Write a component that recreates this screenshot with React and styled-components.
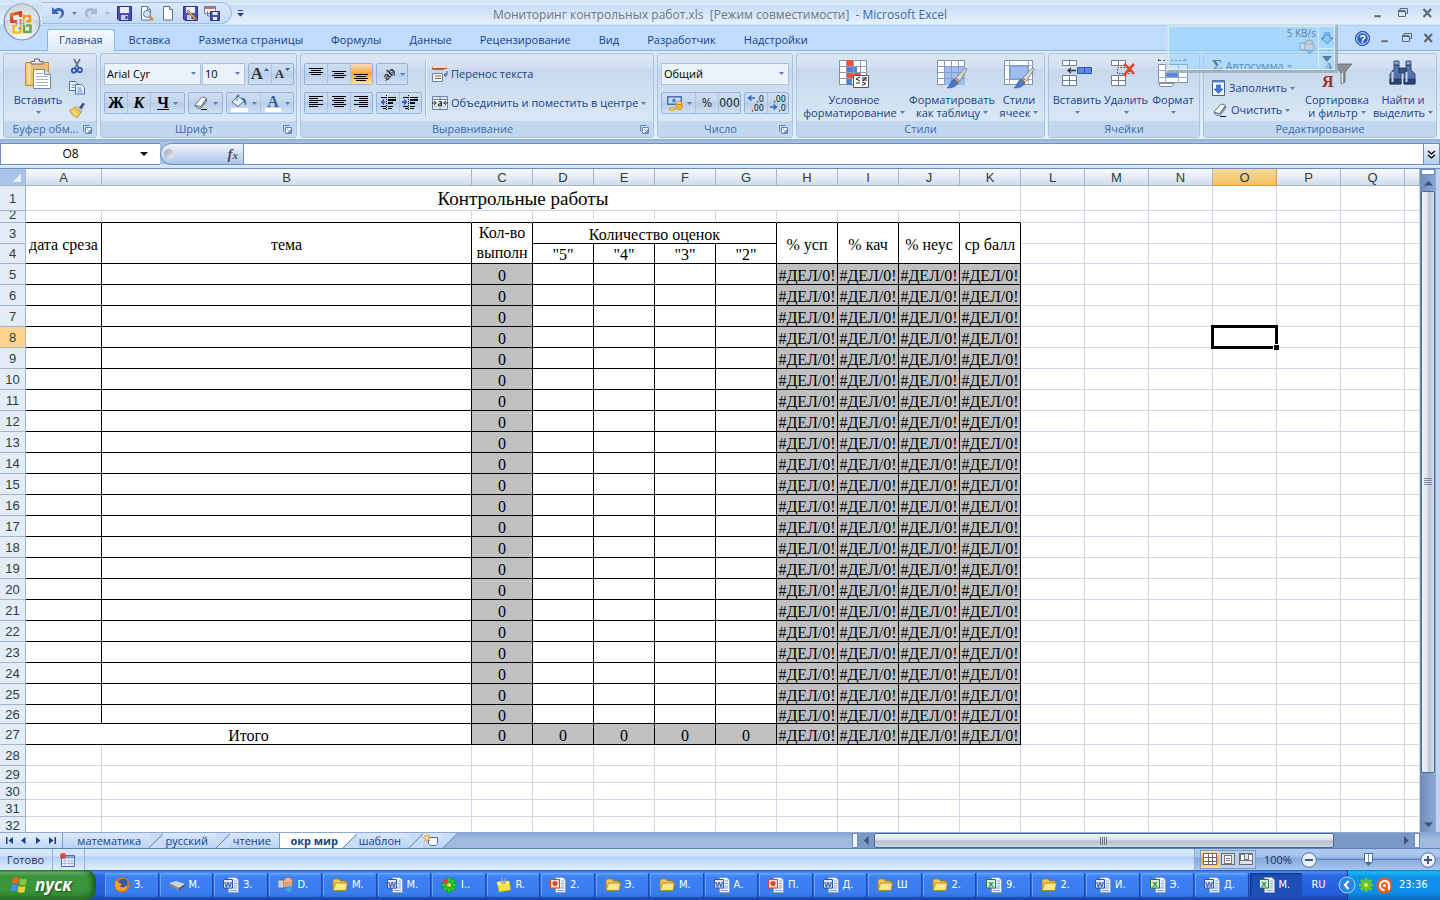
import React from "react";
import styled, { createGlobalStyle, css } from "styled-components";

const Global = createGlobalStyle`
  *, *::before, *::after { box-sizing: border-box; }
  html, body, #root { height: 100%; margin: 0; }
  body { font: 11px/14px "Open Sans", "Noto Sans", sans-serif; color: #15428b; overflow: hidden; }
  button, input, select { font: inherit; color: inherit; margin: 0; padding: 0; border: 0; background: none; border-radius: 0; }
  button { cursor: default; }
`;

const Screen = styled.div`
  display: flex;
  flex-direction: column;
  height: 100vh;
  position: relative;
  background: #bfdbff;
`;

const Svg = styled.svg`
  display: block;
  flex: none;
`;

/* ---------- title bar ---------- */
const TitleBar = styled.header`
  display: grid;
  grid-template-columns: 1fr auto 1fr;
  align-items: center;
  height: 26px;
  flex: none;
  background: linear-gradient(#d8e6f9 0, #d8e6f9 5px, #c9ddf7 5px, #e6f0fc 24px, #b2d3f2 25px);
`;
const QuickBar = styled.div`
  display: flex;
  align-items: center;
  gap: 6px;
  width: 190px;
  height: 22px;
  margin-left: 42px;
  padding-left: 8px;
  border: 1px solid #9dbbe3;
  border-left: 0;
  border-radius: 0 12px 12px 0;
  background: linear-gradient(#dbe9fb, #c4daf6);
`;
const QuickRow = styled.div`
  display: flex;
  align-items: center;
  gap: 4px;
`;
const IconButton = styled.button`
  display: flex;
  align-items: center;
  justify-content: center;
  width: ${(p) => p.$w || 16}px;
  height: 20px;
  flex: none;
`;
const Title = styled.h1`
  margin: 0;
  padding-top: 3px;
  font: 400 12px/18px "Open Sans", "Noto Sans", sans-serif;
  white-space: pre;
  color: #6d7684;
  span { color: #3e6aaa; margin-left: 3px; }
`;
const WindowButtons = styled.div`
  display: flex;
  justify-content: flex-end;
  gap: 9px;
  padding-right: 5px;
`;
const OfficeButton = styled.button`
  position: absolute;
  left: 3px;
  top: 3px;
  width: 38px;
  height: 38px;
`;

/* ---------- tabs ---------- */
const TabBar = styled.nav`
  display: flex;
  align-items: flex-end;
  height: 25px;
  flex: none;
  padding-left: 47px;
  border-bottom: 1px solid #8db2e3;
  background: #bfdbff;
`;
const RibbonTab = styled.button`
  height: 22px;
  padding: 0 ${(p) => (p.$active ? 11 : 14)}px 1px;
  margin-bottom: -1px;
  white-space: nowrap;
  ${(p) =>
    p.$active &&
    css`
      && {
        border: 1px solid #8db2e3;
        border-bottom: 0;
        border-radius: 3px 3px 0 0;
        background: linear-gradient(#f4f9ff, #dfeaf6);
      }
    `}
`;
const TabTools = styled.div`
  display: flex;
  align-items: center;
  gap: 6px;
  margin-left: auto;
  padding: 0 4px 2px 0;
`;

/* ---------- ribbon ---------- */
const Ribbon = styled.section`
  display: flex;
  gap: 3px;
  flex: none;
  height: 88px;
  padding: 2px 3px 1px;
  background: linear-gradient(#dde8f5, #cfe0f3 30%, #e3f2fd);
`;
const GroupBox = styled.section`
  display: flex;
  flex-direction: column;
  flex: ${(p) => (p.$w ? "none" : "1 0 0")};
  width: ${(p) => (p.$w ? p.$w + "px" : "auto")};
  border: 1px solid #a9c3e0;
  border-radius: 3px;
  overflow: hidden;
  background: linear-gradient(#dce7f4 0, #d3e0f0 14px, #c7d8ec 15px, #d9e7f5 66px);
`;
const GroupBody = styled.div`
  display: flex;
  flex: 1;
  min-height: 0;
  padding: 0 0 0 ${(p) => p.$pad || 3}px;
`;
const GroupLabel = styled.footer`
  display: flex;
  height: 16px;
  flex: none;
  align-items: center;
  padding: 0 4px;
  background: #c1d8f0;
  color: #3e6aaa;
  span { flex: 1; text-align: center; white-space: nowrap; }
`;
const Stack = styled.div`
  display: flex;
  flex-direction: column;
  gap: 7px;
  padding-top: 9px;
`;
const Line = styled.div`
  display: flex;
  gap: 3px;
  height: 22px;
`;
const Combo = styled.div`
  position: relative;
  width: ${(p) => p.$w}px;
  height: 22px;
  margin-right: ${(p) => (p.$joined ? -2 : 0)}px;
  border: 1px solid #abc1de;
  background: #eaf2fb;
  color: #000;
  select {
    width: 100%;
    height: 20px;
    padding-left: 2px;
    appearance: none;
    outline: 0;
  }
  svg { position: absolute; right: 4px; top: 8px; pointer-events: none; }
`;
const ButtonGroup = styled.div`
  display: flex;
  height: 22px;
  border: 1px solid #92b3dc;
  border-radius: 2px;
  background: linear-gradient(#cfdff2 0, #c2d5ec 9px, #b7cde8 10px, #cfe0f4);
  button + button { border-left: 1px solid #a9c3e3; }
`;
const ToolButton = styled.button`
  display: flex;
  align-items: center;
  justify-content: center;
  gap: ${(p) => (p.$tight ? 1 : 4)}px;
  width: ${(p) => p.$w}px;
  && {
    background: ${(p) => (p.$on ? "linear-gradient(#fbdbb5 0, #f9b257 8px, #fb9f33 9px, #fee68a)" : "none")};
    ${(p) => p.$digits && 'font: 12px/18px "DejaVu Sans Condensed", sans-serif; color: #222;'}
  }
`;
const Letter = styled.span`
  font: ${(p) => (p.$i ? "italic " : "")}bold ${(p) => p.$s || 16}px/18px "Liberation Serif", serif;
  color: ${(p) => p.$c || "#000"};
  text-decoration: ${(p) => (p.$u ? "underline" : "none")};
`;
const Divider = styled.div`
  width: 2px;
  height: 55px;
  margin: 7px 5px 0 3px;
  border-left: 1px solid #9cb8dc;
  border-right: 1px solid #eef5fc;
`;
const TextButton = styled.button`
  display: flex;
  align-items: center;
  gap: 3px;
  height: 22px;
  flex: none;
  white-space: nowrap;
`;
const SmallStack = styled.div`
  display: flex;
  flex-direction: column;
  padding-top: 1px;
  width: ${(p) => p.$w}px;
`;
const LargeButton = styled.button`
  display: flex;
  flex-direction: column;
  align-items: center;
  width: ${(p) => p.$w}px;
  flex: none;
  && { padding-top: 4px; }
`;
const LargeIcon = styled.span`
  display: flex;
  align-items: center;
  justify-content: center;
  height: 32px;
  margin-bottom: 3px;
`;
const LargeText = styled.span`
  display: flex;
  align-items: center;
  gap: 3px;
  height: 13px;
  line-height: 13px;
  white-space: nowrap;
`;

/* ---------- formula bar ---------- */
const FormulaBar = styled.div`
  display: flex;
  height: 29px;
  flex: none;
  padding: 4px 0 3px;
  background: linear-gradient(#93acd0 0, #abc4e6 4px, #abc4e6 25px, #e2edfb 26px, #cfe0f5);
`;
const NameBox = styled.div`
  display: flex;
  align-items: center;
  width: 160px;
  border: 1px solid #6a8fbf;
  border-width: 1px 0 1px 1px;
  background: #fff;
  color: #000;
  input { width: 139px; text-align: center; font-size: 12px; outline: 0; }
`;
const FxStrip = styled.div`
  display: flex;
  align-items: center;
  justify-content: space-between;
  width: 84px;
  padding: 0 5px 0 3px;
  border: 1px solid #6a8fbf;
  border-radius: 11px 0 0 11px;
  background: linear-gradient(#f0f5fb, #aac4e6);
`;
const Knob = styled.span`
  width: 10px;
  height: 10px;
  border-radius: 50%;
  background: linear-gradient(135deg, #9aa2b0, #f3f5f9);
`;
const FxButton = styled.button`
  && { font: italic bold 15px/18px "Liberation Serif", serif; color: #4d535f; }
  small { font-size: 11px; }
`;
const FormulaInput = styled.input`
  flex: 1;
  min-width: 0;
  && { border: 1px solid #6a8fbf; border-left: 0; background: #fff; }
`;
const ExpandButton = styled.button`
  display: flex;
  align-items: center;
  justify-content: center;
  width: 16px;
  && { border: 1px solid #6a8fbf; border-left: 0; background: linear-gradient(#f4f8fd, #b5cceb); }
`;

/* ---------- sheet ---------- */
const SheetArea = styled.main`
  display: flex;
  flex: 1;
  min-height: 0;
  border-top: 1px solid #6a8fbf;
  background: #bfd4f2;
`;
const GridPane = styled.div`
  flex: 1;
  min-width: 0;
  overflow: hidden;
  background: #fff;
`;
const Grid = styled.table`
  width: 100%;
  table-layout: fixed;
  border-collapse: separate;
  border-spacing: 0;
  color: #000;
  font: 16px/20px "Liberation Serif", serif;
`;
const ColHead = styled.th`
  height: 17px;
  padding: 0;
  font: 13px/15px "Liberation Sans", sans-serif;
  color: #27413e;
  border-right: 1px solid ${(p) => (p.$sel ? "#f29536" : "#9eb6ce")};
  border-bottom: 1px solid ${(p) => (p.$sel ? "#f29536" : "#9eb6ce")};
  background: ${(p) => (p.$sel ? "linear-gradient(#f9d9a2, #f1c05f)" : "linear-gradient(#f9fbfd, #d3dbe9)")};
`;
const Corner = styled.td`
  padding: 0;
  border-right: 1px solid #9eb6ce;
  border-bottom: 1px solid #9eb6ce;
  background:
    linear-gradient(135deg, transparent 50%, #e9f0fa 51%) right 4px bottom 3px / 9px 9px no-repeat
    #a9c4e9;
`;
const RowHead = styled.th`
  height: ${(p) => p.$h}px;
  padding: 0;
  overflow: hidden;
  border-right: 1px solid #9eb6ce;
  border-bottom: 1px solid #9eb6ce;
  background: ${(p) => (p.$sel ? "#ffd58d" : "#e4ecf7")};
  font: 13px/15px "Liberation Sans", sans-serif;
  color: #27413e;
  div {
    display: flex;
    align-items: flex-end;
    justify-content: center;
    height: ${(p) => Math.min(p.$h - 1, 15)}px;
    overflow: hidden;
  }
`;
const Cell = styled.td`
  position: relative;
  padding: ${(p) => (p.$wrap ? 0 : 2)}px 0 0;
  text-align: center;
  white-space: ${(p) => (p.$wrap ? "normal" : "nowrap")};
  line-height: ${(p) => (p.$wrap ? 20 : p.$title ? 22 : 9)}px;
  font-size: ${(p) => (p.$title ? 19 : 16)}px;
  border-right: 1px solid ${(p) => (p.$box ? "#000" : "#d0d7e5")};
  border-bottom: 1px solid ${(p) => (p.$box || p.$under ? "#000" : "#d0d7e5")};
  background: ${(p) => (p.$grey ? "#c0c0c0" : "#fff")};
`;
const Selection = styled.div`
  position: absolute;
  z-index: 1;
  inset: -2px;
  border: 3px solid #000;
  &::after {
    content: "";
    position: absolute;
    right: -4px;
    bottom: -4px;
    width: 6px;
    height: 6px;
    background: #000;
    border: 1px solid #fff;
    border-width: 1px 0 0 1px;
  }
`;

const VScroll = styled.div`
  display: flex;
  flex-direction: column;
  align-items: center;
  width: 16px;
  margin-right: 4px;
  background: linear-gradient(90deg, #6c8cba, #8fabd3);
`;
const SplitBox = styled.div`
  width: 14px;
  height: 6px;
  border: 1px solid #6a8fbf;
  background: #fff;
`;
const ScrollArrow = styled.button`
  display: flex;
  align-items: center;
  justify-content: center;
  width: 16px;
  height: ${(p) => p.$h || 16}px;
  flex: none;
`;
const VThumb = styled.div`
  display: flex;
  align-items: center;
  justify-content: center;
  width: 14px;
  flex: 580 0 0;
  border: 1px solid #4d6a96;
  border-radius: 2px;
  background: linear-gradient(90deg, #f2f5f9, #dfe5ee 40%, #b8c5d8 60%, #d6deea);
`;
const VRest = styled.div`
  flex: 43 0 0;
`;

/* ---------- sheet tabs ---------- */
const SheetBar = styled.div`
  display: flex;
  height: 17px;
  flex: none;
  border-top: 1px solid #8ba9d2;
  border-bottom: 1px solid #5a82b8;
  background: linear-gradient(#86a6d3, #a1b9dd 6px, #9fb8dc);
`;
const SheetNav = styled.div`
  display: flex;
  align-items: center;
  justify-content: space-around;
  width: 63px;
  padding: 0 2px;
  border-right: 1px solid #7c9cc8;
  background: linear-gradient(#e7f0fb, #c0d7f5);
`;
const SheetTab = styled.button`
  width: ${(p) => p.$w}px;
  flex: none;
  line-height: 15px;
  white-space: nowrap;
  text-align: right;
  && {
    padding-right: ${(p) => (p.$active ? 5 : 8)}px;
    font-weight: ${(p) => (p.$active ? 700 : 400)};
    background: ${(p) => (p.$active ? "#fff" : "linear-gradient(#dbe8fa, #b9d2f4)")};
    border-right: ${(p) => (p.$edge ? "1px solid #7c9cc8" : "0")};
  }
`;
const Slant = styled.span`
  width: 14px;
  flex: none;
  background: linear-gradient(135deg, ${(p) => p.$l} 48%, #6f90bf 49%, #6f90bf 52%, ${(p) => p.$r} 53%);
`;
const HScroll = styled.div`
  display: flex;
  align-items: stretch;
  flex: none;
  width: 40%;
  padding-left: 8px;
  margin-left: auto;
  margin-right: 20px;
`;
const HSplit = styled.div`
  width: 6px;
  border: 1px solid #6a8fbf;
  background: #f4f8fd;
`;
const HTrack = styled.div`
  display: flex;
  flex: 1;
  background: #7a99c5;
`;
const HThumb = styled.div`
  display: flex;
  align-items: center;
  justify-content: center;
  flex: 459 0 0;
  border: 1px solid #4d6a96;
  border-radius: 2px;
  background: linear-gradient(#f2f5f9, #d9dfe8 45%, #b5bfce 55%, #d0d8e3);
`;
const HRest = styled.div`
  flex: 64 0 0;
`;

/* ---------- status bar ---------- */
const StatusBar = styled.footer`
  display: flex;
  height: 21px;
  flex: none;
  background: linear-gradient(#d9e8fb 0, #cfe1f9 7px, #b3cff4 8px, #dcebfc 19px);
  color: #1c2f66;
`;
const StatusPart = styled.div`
  display: flex;
  align-items: center;
  padding: 0 8px 0 7px;
  border-right: 1px solid #8fb2e2;
  flex: ${(p) => (p.$grow ? 1 : "none")};
`;
const ViewPart = styled.div`
  display: flex;
  align-items: center;
  width: 245px;
  padding: 0 4px 0 5px;
  background: linear-gradient(#b0cbee 0, #a4c1ea 8px, #84a9dc 9px, #a8c6ef);
`;
const ViewGroup = styled.div`
  display: flex;
  height: 19px;
  margin-right: 8px;
  border: 1px solid #7b9cc9;
  background: #b7d0f0;
`;
const Percent = styled.span`
  width: 37px;
`;
const ZoomRange = styled.input.attrs({ type: "range" })`
  flex: 1;
  min-width: 0;
  height: 18px;
  appearance: none;
  && { background: linear-gradient(#5e83b8, #5e83b8) center / 100% 1px no-repeat; }
  &::-webkit-slider-thumb {
    appearance: none;
    width: 9px;
    height: 13px;
    background: linear-gradient(90deg, #fff 3px, #6f8fbe 3px, #6f8fbe 4px, #fff 4px) 1px 1px / 7px 8px no-repeat #4a6da3;
    clip-path: polygon(0 0, 100% 0, 100% 65%, 50% 100%, 0 65%);
  }
`;

/* ---------- task bar ---------- */
const TaskBar = styled.footer`
  display: flex;
  height: 30px;
  flex: none;
  background: linear-gradient(#1f51c4 0, #4a8ff2 2px, #2c69e2 5px, #245edb 24px, #1941a5);
  color: #fff;
  font-family: "DejaVu Sans Condensed", "DejaVu Sans", sans-serif;
`;
const StartButton = styled.button`
  display: flex;
  align-items: center;
  gap: 6px;
  width: 96px;
  flex: none;
  && {
    padding: 0 0 1px 10px;
    border-radius: 0 10px 10px 0;
    background: linear-gradient(#2f7a30 0, #71b76f 2px, #3c943b 6px, #37963a 20px, #2c7a2d);
    box-shadow: inset -4px 0 5px #1f5c20;
    font: italic bold 17px/24px "Open Sans", sans-serif;
    color: #fff;
  }
  text-shadow: 1px 1px 2px #1a4a1b;
`;
const TaskList = styled.div`
  display: flex;
  flex: 1;
  min-width: 0;
  gap: 2px;
  padding: 3px 0 3px 9px;
`;
const TaskButton = styled.button`
  display: flex;
  align-items: center;
  gap: 4px;
  flex: 1 0 0;
  min-width: 0;
  overflow: hidden;
  white-space: nowrap;
  && {
    padding-left: 9px;
    border-radius: 2px;
    color: #fff;
    background: ${(p) => (p.$on ? "#1e4fb4" : "linear-gradient(#5f9cf9 0, #3d80f3 4px, #3a7df0 20px, #3170e0)")};
    box-shadow: ${(p) => (p.$on ? "inset 1px 1px 2px #0e2f7c" : "inset 1px 1px 0 #6aa5fb, 1px 0 0 #1c48ad")};
  }
`;
const Language = styled.button`
  width: 45px;
  flex: none;
  && { color: #fff; padding-right: 12px; }
`;
const Tray = styled.div`
  position: relative;
  display: flex;
  align-items: center;
  gap: 2px;
  width: 93px;
  flex: none;
  border-left: 1px solid #0b3a9e;
  background: linear-gradient(#0c7bd2 0, #19b9f5 2px, #1290e8 7px, #0f8eea 22px, #0b68c0);
  time { margin-left: 4px; }
`;
const TrayToggle = styled.button`
  display: flex;
  && { margin-left: -10px; }
`;

/* ---------- floating traffic meter ---------- */
const Meter = styled.aside`
  position: absolute;
  top: 24px;
  right: 102px;
  display: grid;
  grid-template-columns: 1fr 16px;
  width: 172px;
  height: 49px;
  border: 2px solid rgba(211, 226, 234, 0.8);
  border-right: 3px solid rgba(160, 172, 176, 0.8);
  border-bottom: 3px solid rgba(160, 172, 176, 0.8);
  box-shadow: inset 0 0 0 1px #dfe9e6;
  padding: 1px;
  background: rgba(144, 210, 255, 0.5);
  color: #63809a;
  font-size: 10px;
  line-height: 12px;
`;
const MeterMain = styled.div`
  display: flex;
  flex-direction: column;
  align-items: flex-end;
  padding-right: 2px;
`;
const MeterSide = styled.div`
  display: grid;
  grid-template-rows: 1fr 1fr;
  justify-items: center;
  align-items: center;
  border-left: 1px solid #dfe9e6;
  background: linear-gradient(#dfe9e6, #dfe9e6) center / 100% 1px no-repeat;
`;

/* ---------- drawings ---------- */
const Arrow = ({ c = "#5a7fb5" }) => (
  <Svg width="5" height="3" viewBox="0 0 5 3"><path d="M0 0h5L2.500 3z" fill={c} /></Svg>
);
const Launcher = () => (
  <Svg width="9" height="9" viewBox="0 0 9 9" fill="none" stroke="#5f86b8"><path d="M.5 6.500V.5h6" /><path d="M2.500 2.500h6v6h-6z" fill="#fff" /><path d="M4 4l3 3M7.500 4.500v3h-3" /></Svg>
);
const OfficeLogo = () => (
  <Svg width="38" height="38" viewBox="0 0 38 38">
    <defs>
      <radialGradient id="orb" cx=".5" cy=".8" r=".8"><stop offset="0" stopColor="#fff" /><stop offset=".6" stopColor="#d5dbe5" /><stop offset="1" stopColor="#8e9bb0" /></radialGradient>
      <linearGradient id="red" x1="0" y1="0" x2="1" y2="1"><stop offset="0" stopColor="#f0842b" /><stop offset=".5" stopColor="#d93616" /><stop offset="1" stopColor="#f07a24" /></linearGradient>
    </defs>
    <circle cx="19" cy="19" r="18.500" fill="#7085a5" />
    <circle cx="19" cy="19" r="17.500" fill="url(#orb)" />
    <path d="M2 18a17 17 0 0134 0c-8-3-26-3-34 0z" fill="#f5f7fa" opacity=".6" />
    <g fill="none" strokeWidth="2.600" strokeLinejoin="round">
      <path d="M14 18.500H8.500V11.500L17.500 9.500V14" stroke="url(#red)" strokeWidth="3.200" />
      <path d="M23 18.500h4v-5.500h-6V16" stroke="#f4952a" />
      <path d="M21 22v7h6.500v-6.500H23" stroke="#6aac3f" />
      <path d="M17.500 22v7.500H10.500v-6.500H14" stroke="#f5bb28" />
    </g>
    <path d="M16.500 16.500h2v2h-2z" fill="#e2501b" /><path d="M19.500 16.500h2v2h-2z" fill="#f4a32c" /><path d="M16.500 19.500h2v2h-2z" fill="#3d85d4" /><path d="M19.500 19.500h2v2h-2z" fill="#5fa83b" />
    <path d="M15.500 24.500h2v2h-2zM12.500 19.500h2v2h-2z" fill="#4c92dc" />
  </Svg>
);
const Undo = ({ c = "#3f66c0", flip }) => (
  <Svg width="14" height="14" viewBox="0 0 14 14">
    <g transform={flip ? "translate(14 0) scale(-1 1)" : undefined}>
      <path d="M1 1v7h7L5.800 5.800C8 4 10.500 5 10.500 7.500 10.500 10 8.500 12 7 13c4-.8 6.500-3.500 6-7C12.500 2 7.500.7 3.600 3.500z" fill={c} />
    </g>
  </Svg>
);
const Floppy = ({ pen }) => (
  <Svg width="15" height="15" viewBox="0 0 15 15">
    <path d="M.5.5h14v14H2l-1.500-1.500z" fill="#4a4fb5" stroke="#2f3390" />
    <path d="M3 1h9v6H3z" fill="#e9eefb" /><path d="M4 9h7v5H4z" fill="#c7cbe8" /><path d="M8.500 10h2v3h-2z" fill="#33377f" />
    {pen && <path d="M5 4l8 8 1.500 2-2.500-.8L4 6z" fill="#f0b345" stroke="#7c4a17" strokeWidth=".6" />}
  </Svg>
);
const Page = ({ lens }) => (
  <Svg width="15" height="15" viewBox="0 0 15 15">
    <path d="M2.500.5h6l3 3v10.500h-9z" fill="#fff" stroke="#5d6f93" /><path d="M8.500.5v3h3" fill="#d4def0" stroke="#5d6f93" />
    {lens && <><circle cx="8" cy="8" r="3.500" fill="#cbe6fb" stroke="#667a99" /><path d="M10.500 10.500l3.500 3.500" stroke="#d98a2b" strokeWidth="2.500" /></>}
  </Svg>
);
const SaveAll = () => (
  <Svg width="16" height="15" viewBox="0 0 16 15">
    <path d="M.5.500h11v7H.5z" fill="#fff" stroke="#6c7ea3" /><path d="M1 1h10v2H1z" fill="#dd6b52" /><path d="M3.500 5v5h3" stroke="#6c7ea3" fill="none" />
    <path d="M6.500 5.500h9v9h-9z" fill="#4a4fb5" stroke="#2f3390" /><path d="M8.500 6h5v3h-5zM9 11h4v3H9z" fill="#e9eefb" />
  </Svg>
);
const Minimize = () => <Svg width="16" height="12" viewBox="0 0 16 12"><path d="M5 8h7v2.500H5z" fill="#5f6874" stroke="#fff" strokeWidth=".4" /></Svg>;
const Restore = () => <Svg width="16" height="12" viewBox="0 0 16 12" fill="none" stroke="#5f6874"><path d="M6 3.500V1.500h7.500v5h-2" /><path d="M4 4h7" strokeWidth="2" /><path d="M4.500 4v5.500h7V4" /></Svg>;
const Close = () => <Svg width="16" height="12" viewBox="0 0 16 12"><path d="M4.500 2l7.500 8M12 2l-7.500 8" stroke="#5f6874" strokeWidth="2.200" /></Svg>;
const Help = () => (
  <Svg width="15" height="15" viewBox="0 0 15 15"><circle cx="7.500" cy="7.500" r="7" fill="#2a62c8" stroke="#16429a" /><circle cx="7.500" cy="7.500" r="5.800" fill="none" stroke="#dce9fb" /><text x="7.500" y="11.500" fontSize="11" fontWeight="700" fill="#fff" textAnchor="middle" fontFamily="Liberation Sans">?</text></Svg>
);
const PasteIcon = () => (
  <Svg width="28" height="32" viewBox="0 0 28 32">
    <path d="M1.500 4.500h23v23h-23z" fill="#efc069" stroke="#c78f35" /><path d="M3 6h4v20H3z" fill="#f8d790" />
    <path d="M7 6V3.500h3.500V1h5v2.500H19V6z" fill="#e8e8ea" stroke="#6c6c70" />
    <path d="M9.500 11.500h11l6 5V30.500h-17z" fill="#fff" stroke="#7088b0" /><path d="M20.500 11.500v5h6" fill="#dbe5f4" stroke="#7088b0" />
    <path d="M12 15.500h7M12 18.500h12M12 21.500h12M12 24.500h12M12 27.500h12" stroke="#9fb2d0" />
  </Svg>
);
const CutIcon = () => (
  <Svg width="16" height="16" viewBox="0 0 16 16" fill="none"><path d="M5 1l5 9M11 1L6 10" stroke="#5a6e8f" strokeWidth="1.600" /><circle cx="5" cy="12.500" r="2.200" stroke="#2f57b3" strokeWidth="1.800" /><circle cx="10.800" cy="12" r="2.200" stroke="#2f57b3" strokeWidth="1.800" /></Svg>
);
const CopyIcon = () => (
  <Svg width="16" height="16" viewBox="0 0 16 16"><g fill="#f5f9ff" stroke="#4a6eb0"><path d="M.5 1.500h6l3 3v6h-9z" /><path d="M6.500 4.500h6l3 3v6.500h-9z" /></g><path d="M2.500 5h4M2.500 7.500h3M8.500 8h4M8.500 10h5M8.500 12h5" stroke="#5c86cc" /></Svg>
);
const BrushIcon = () => (
  <Svg width="16" height="16" viewBox="0 0 16 16"><path d="M10 5.500L14 .5l1.800 1.500L12.500 7.500z" fill="#3d4f86" /><path d="M7.500 4l6 4.500-2 2.500-6-4.500z" fill="#e0dccd" stroke="#8c8364" strokeWidth=".6" /><path d="M6 5.500l6 4.500-3.500 5.500C5 14.500 2 12 .5 8.500z" fill="#f4cc57" stroke="#a07e25" strokeWidth=".7" /><path d="M3 8.500l5 5" stroke="#fff0b8" /></Svg>
);
const Lines = ({ rows }) => (
  <Svg width="15" height="16" viewBox="0 0 15 16" shapeRendering="crispEdges">
    {rows.map(([y, a, b]) => <path key={y} d={`M${a} ${y}h${b}v1h-${b}z`} fill="#000" />)}
  </Svg>
);
const Orient = () => (
  <Svg width="16" height="16" viewBox="0 0 16 16"><text x="2" y="13" fontSize="11" fontFamily="Liberation Sans" fontWeight="700" fill="#333" transform="rotate(-45 7 8)">ab</text><path d="M5 15l9-8M11 6.500h3.500V10" stroke="#666" fill="none" /></Svg>
);
const Indent = ({ right }) => (
  <Svg width="17" height="16" viewBox="0 0 17 16" shapeRendering="crispEdges">
    <path d="M1 2h5v1H1zM8 2h8v1H8zM8 4h8v2H8zM8 7h5v2H8zM1 11h5v1H1zM8 11h5v1H8zM3 13h3v1H3zM8 13h4v1H8z" fill="#000" />
    <path d="M6.500 0v16" stroke="#000" strokeDasharray="1 1" />
    <path d={right ? "M0 6h2V4l4 3-4 3V8H0z" : "M5 6H3.500V4L0 7l3.500 3V8H5z"} fill="#2e63d6" />
  </Svg>
);
const WrapIcon = () => (
  <Svg width="16" height="16" viewBox="0 0 16 16"><path d="M.5 1v2.500H12M.5 15.500h10v-8H.5z" fill="#f1f6fd" stroke="#6b80a5" /><path d="M1 2.500h14M3 10h6M3 12.500h6" stroke="#a05a22" strokeWidth="1.200" /><path d="M15 5v4h-2M14.500 7L12 9l2.500 2" fill="none" stroke="#3b5c94" /></Svg>
);
const MergeIcon = () => (
  <Svg width="16" height="16" viewBox="0 0 16 16"><path d="M.5 1.500h15v13H.5z" fill="#dfeaf8" stroke="#6b80a5" /><path d="M8 1.500v3M8 12v3M.5 4.500h15M.5 11.500h15" stroke="#6b80a5" /><path d="M1 5h14v6.500H1z" fill="#fff" /><path d="M0 8h4M12 8h4M2 6l2.500 2L2 10M14 6l-2.500 2 2.500 2" stroke="#222" fill="none" /><text x="8" y="11" fontSize="10" fontWeight="700" textAnchor="middle" fontFamily="Liberation Serif" fill="#111">a</text></Svg>
);
const Eraser = () => (
  <Svg width="16" height="16" viewBox="0 0 16 16"><path d="M2 10l6.500-7.500c.5-.5 4.500-.3 5 .8L8 11.500c-1.500 1.500-5.500 1-6-1.500z" fill="#fff" stroke="#5e6b83" /><path d="M2.500 10.500l5.500 1L13.500 4v2.500L8 13c-2 1-5 .3-5.500-2.500z" fill="#cfd6e2" stroke="#5e6b83" /><path d="M8 14.500h6" stroke="#111" /></Svg>
);
const Bucket = () => (
  <Svg width="17" height="18" viewBox="0 0 17 18"><path d="M1 8l6-6 6 5-6 5.500z" fill="#e8f0fb" stroke="#4f6792" /><path d="M6 7V1.500C7 .5 8 .5 8.500 2" stroke="#4f6792" fill="none" /><path d="M10 3.500c4 0 6 3 5 8-1.500-1-2-3-2-5z" fill="#3d69bd" /><path d="M0 14h17v4H0z" fill="#fff" /></Svg>
);
const FontColor = () => (
  <Svg width="16" height="18" viewBox="0 0 16 18"><text x="8" y="12.500" fontSize="16" fontWeight="700" textAnchor="middle" fontFamily="Liberation Serif" fill="#3a5f9f">A</text><path d="M0 14h16v4H0z" fill="#fff" /></Svg>
);
const SizeTip = ({ up }) => <Svg width="5" height="12" viewBox="0 0 5 12"><path d={up ? "M0 3h5L2.500 0z" : "M0 0h5L2.500 3z"} fill="#3e62a5" /></Svg>;
const Money = () => (
  <Svg width="17" height="16" viewBox="0 0 17 16"><path d="M1 1h15v9H1z" fill="#4a70b8" /><path d="M2.500 2.500h12v6h-12z" fill="#c9daf3" /><circle cx="8" cy="5.500" r="2" fill="#5f86c8" /><ellipse cx="13" cy="8" rx="3" ry="1.500" fill="#ffd873" stroke="#b07d18" strokeWidth=".6" /><path d="M10 8.500v5c1 1.500 5 1.500 6 0v-5c-1 1.500-5 1.500-6 0z" fill="#f0b62e" stroke="#b07d18" strokeWidth=".6" /><ellipse cx="6" cy="14" rx="3" ry="1.500" fill="#ffd050" stroke="#b07d18" strokeWidth=".6" /></Svg>
);
const Decimals = ({ more }) => (
  <Svg width="18" height="18" viewBox="0 0 18 18" fontFamily="DejaVu Sans Condensed" fontSize="9" fill="#222">
    <text x="17" y="8" textAnchor="end">{more ? ",0" : ",00"}</text><text x="17" y="17" textAnchor="end">{more ? ",00" : ",0"}</text>
    <path d={more ? "M8 4H2M4.500 1.500L1.500 4l3 2.500" : "M1 13h6M4.500 10.500l3 2.500-3 2.500"} stroke="#2e63d6" strokeWidth="1.500" fill="none" />
  </Svg>
);
const Sheet = ({ hl }) => (
  <><path d="M1.500 2.500h27v24h-27z" fill="#fff" stroke="#7e8fae" />{hl}<path d="M8.500 2v25M15.500 2v25M22.500 2v25M1 8.500h28M1 14.500h28M1 20.500h28" stroke="#8b9cbb" fill="none" /></>
);
const PaintBrush = () => (
  <g><path d="M20 20L29 10l2 1-7 12z" fill="#d9d6d2" stroke="#6f6b68" strokeWidth=".7" /><path d="M18.500 20.500l4.500 3.500-1.500 2-5-4z" fill="#a9743d" /><path d="M17 21.500l4.500 4c-2 4-7 4.500-10.500 4.500 3-2 3-6 6-8.500z" fill="#4a78cf" stroke="#2c529b" strokeWidth=".6" /></g>
);
const CondIcon = () => (
  <Svg width="32" height="32" viewBox="0 0 32 32"><Sheet hl={<><path d="M8 2h7v6H8zM8 15h14v5H8z" fill="#f0503c" /><path d="M8 9h11v6H8zM8 21h6v6H8z" fill="#4c80dd" /></>} /><path d="M15.500 17.500h15v12h-15z" fill="#fff" stroke="#555" /><path d="M22 19l-4 2 4 2M18 25h4M24 20h5M24 22h5M28 19l-3 4M24 24l4 1.500-4 2" stroke="#222" fill="none" /></Svg>
);
const TableFmtIcon = () => (
  <Svg width="32" height="32" viewBox="0 0 32 32"><Sheet hl={<path d="M9 9h20v18H9z" fill="#9dbdf5" />} /><PaintBrush /></Svg>
);
const CellStyleIcon = () => (
  <Svg width="32" height="32" viewBox="0 0 32 32"><path d="M1.500 2.500h28v24h-28z" fill="#fff" stroke="#7e8fae" /><path d="M6.500 2v25M25.500 2v25M1 7.500h29M1 21.500h29" stroke="#9aa9c4" /><path d="M7 8h18v13H7z" fill="#9dbdf5" stroke="#6b8fd0" /><PaintBrush /></Svg>
);
const Cells2 = ({ y, h = 5 }) => <path d={`M1.500 ${y}h14v${h}h-14zM8.500 ${y}v${h}`} fill="#fff" stroke="#6f7d96" />;
const InsertIcon = () => (
  <Svg width="32" height="32" viewBox="0 0 32 32"><Cells2 y={2.5} /><Cells2 y={17.5} h={10} /><path d="M1.500 22.500h14" stroke="#6f7d96" /><path d="M16.500 9.500h14v6h-14zM23.500 9.500v6" fill="#5b8ae6" stroke="#31589f" /><path d="M7 12.500h8M10 10l-3 2.500 3 2.500" stroke="#333" fill="none" strokeWidth="1.300" /></Svg>
);
const DeleteIcon = () => (
  <Svg width="32" height="32" viewBox="0 0 32 32"><Cells2 y={2.5} /><Cells2 y={17.5} h={10} /><path d="M1.500 22.500h14" stroke="#6f7d96" /><path d="M7.500 9.500h12v6h-12z" stroke="#444" strokeDasharray="1.500 1.500" fill="none" /><path d="M14 6c4 3 7 6 10 10M24 6c-4 4-7 7-10 12" stroke="#e8432a" strokeWidth="2.500" fill="none" /></Svg>
);
const FormatIcon = () => (
  <Svg width="32" height="32" viewBox="0 0 32 32"><path d="M1.500 1v4M28.500 1v4M2 2.500h26" stroke="#555" strokeDasharray="2 2" /><path d="M1.500 6.500h29v18h-29z" fill="#fff" stroke="#7e8fae" /><path d="M9 13h12v6H9z" fill="#5b8ae6" /><path d="M8.500 6v19M21.500 6v19M1 12.500h30M1 19.500h30" stroke="#9aa9c4" /><path d="M2 25.500h15l-2 3H3z" fill="#fff" stroke="#7e8fae" /></Svg>
);
const FillIcon = () => (
  <Svg width="14" height="16" viewBox="0 0 14 16"><path d="M.5.500h12v15H.5z" fill="#f4f8fe" stroke="#3b5f9f" /><path d="M.5.500h12v2H.5z" fill="#6288c4" /><path d="M4.500 5h4v4h2.500L6.500 13.500 2 9h2.500z" fill="#3d78e0" stroke="#274f9f" strokeWidth=".6" /></Svg>
);
const SortIcon = () => (
  <Svg width="30" height="32" viewBox="0 0 30 32"><text x="2" y="13" fontSize="13" fontWeight="700" fontFamily="Liberation Serif" fill="#2f5c98">А</text><text x="0" y="29" fontSize="16" fontWeight="700" fontFamily="Liberation Serif" fill="#a03030">Я</text><path d="M12 6h18l-7 8v10l-4 2V15z" fill="#8a9099" stroke="#5d636c" strokeWidth=".8" /><path d="M19.500 15h1.500v10l-1.500 1z" fill="#e5e7ea" /></Svg>
);
const FindIcon = () => (
  <Svg width="30" height="30" viewBox="0 0 30 30"><g stroke="#1f3560" strokeWidth=".8"><path d="M6 6h5v5l2 4v10H2V15l4-5z" fill="#5474ad" /><path d="M18 6h5v5l4 4v10H16V15l2-4z" fill="#5474ad" /><path d="M6 2h5v4H6zM18 2h5v4h-5z" fill="#8ba4cf" /><path d="M2 20h11v5H2zM16 20h11v5H16z" fill="#2c4473" /><path d="M11 9h7v5h-7z" fill="#3a5388" /></g><path d="M4.500 13v10M18.500 13v10" stroke="#c4d4ee" strokeWidth="2" /></Svg>
);
const Tri = ({ d }) => <Svg width="9" height="9" viewBox="0 0 9 9"><path d={d} fill="#15428b" /></Svg>;
const ScrollTri = ({ d }) => <Svg width="9" height="9" viewBox="0 0 9 9"><path d={d} fill="#3b4f78" /></Svg>;
const NewSheet = () => (
  <Svg width="16" height="13" viewBox="0 0 16 13"><path d="M5.500 3.500h9v6l-2 2h-5l-2-2z" fill="#fff" stroke="#4f6ea5" /><path d="M4 0v8M0 4h8M1 1l6 6M7 1L1 7" stroke="#e39a22" /><circle cx="4" cy="4" r="1.500" fill="#fff3b0" /></Svg>
);
const Macro = () => (
  <Svg width="16" height="14" viewBox="0 0 16 14"><path d="M1.500 2.500h13v11h-13z" fill="#fff" stroke="#4f6ea5" /><path d="M2 3h12v2.500H2z" fill="#7fa3dc" /><path d="M5 6v7M9 6v7M12 6v7M2 8h12M2 10.500h12" stroke="#a8b9d6" /><circle cx="3" cy="3" r="3" fill="#dd4c35" /></Svg>
);
const ViewIcon = ({ kind }) => (
  <Svg width="14" height="13" viewBox="0 0 14 13" shapeRendering="crispEdges">
    <path d="M.5.500h13v11H.5z" fill={kind === 0 ? "#fff" : "#dfe3ea"} stroke="#6a6a6a" />
    {kind === 0 && <path d="M5 0v12M9 0v12M0 4.500h14M0 8h14" stroke="#6a6a6a" />}
    {kind === 1 && <><path d="M3.500 2.500h7v8h-7z" fill="#fff" stroke="#777" /><path d="M5 5h4M5 7h4" stroke="#777" /></>}
    {kind === 2 && <path d="M1 1h4v5h4V1h4v6H1zM5 1v5M9 1v5" fill="#fff" stroke="#777" />}
  </Svg>
);
const RoundSign = ({ plus }) => (
  <Svg width="16" height="16" viewBox="0 0 16 16"><circle cx="8" cy="8" r="7.300" fill="#e9f0fa" stroke="#4d6fa8" /><path d={plus ? "M4 8h8M8 4v8" : "M4 8h8"} stroke="#45597c" strokeWidth="2" /></Svg>
);
const Flag = () => (
  <Svg width="19" height="18" viewBox="0 0 19 18"><path d="M3 2c2-1 4-1 6 0L8 8c-2-1-4-1-6 0z" fill="#f0612b" /><path d="M10 2.500c2 1 4 1 7 0L16 8.500c-3 1-5 1-7 0z" fill="#86c440" /><path d="M1.500 9.500c2-1 4-1 6 0l-1 6c-2-1-4-1-6 0z" fill="#4a8ff0" /><path d="M8.500 10c2 1 4 1 7 0l-1 6c-3 1-5 1-7 0z" fill="#fbce2e" /></Svg>
);
const TaskIcon = ({ kind }) => {
  const doc = (color, back, letter) => (
    <><path d="M5.500.500h7.500l2.500 2.500v12.500h-10z" fill="#f3f7fd" stroke="#8b9dbf" /><path d="M11 4h3M11 6.500h3M11 9h3M7 11h7M7 13.500h7" stroke="#7ba3d8" /><path d="M.5 2.500h9v8.500h-9z" fill={back} stroke={color} /><text x="5" y="10" fontSize="8" fontWeight="700" textAnchor="middle" fontFamily="Liberation Sans" fill={color}>{letter}</text></>
  );
  const art = {
    word: doc("#2f52a5", "#dfe9fb", "W"),
    excel: doc("#237a3a", "#d4efd4", "X"),
    ppt: <>{doc("#d8442c", "#fbd9cf", "")}<circle cx="5" cy="6.500" r="2.500" fill="#e2442c" /></>,
    folder: <><path d="M1 13.500V3.500L2.500 2H7l1.500 2H14v3" fill="#f3c94e" stroke="#a77b14" strokeWidth=".8" /><path d="M1 13.500L3.500 6h12L14 13.500z" fill="#fde58c" stroke="#a77b14" strokeWidth=".8" /></>,
    fox: <><circle cx="8" cy="8" r="7.500" fill="#e8681b" /><circle cx="9" cy="6.500" r="4.500" fill="#3558a8" /><path d="M1 5c2-1 3 0 4 1l3 1-2 2c1 2 5 2 7-1 1 4-3 7-7 6S1 10 1 5z" fill="#f7a224" /></>,
    drive: <><path d="M0 6l7-2 9 3-6 4z" fill="#d3d5d8" /><path d="M0 6l10 5v3L0 8z" fill="#888c92" /><path d="M10 11l6-4v2l-6 5z" fill="#5c6068" /></>,
    meter: <><path d="M0 3h6v8H0z" fill="#c9cdd5" stroke="#5d6678" strokeWidth=".7" /><circle cx="10" cy="5" r="4.500" fill="#f0b98b" stroke="#9a5f33" strokeWidth=".6" /><path d="M6 5h8v5H6z" fill="#e3a06c" /><path d="M9 9h4v3h2l-4 4-4-4h2z" fill="#3fa5f0" /></>,
    icq: <><g fill="#27cf39" stroke="#0b7d1c" strokeWidth=".6">{[0, 45, 90, 135, 180, 225, 270].map((a) => <ellipse key={a} cx="8" cy="3.300" rx="2.200" ry="3" transform={`rotate(${a} 8 8)`} />)}</g><ellipse cx="8" cy="3.300" rx="2.200" ry="3" fill="#e8402c" transform="rotate(315 8 8)" /><circle cx="8" cy="8" r="2" fill="#ffe04a" /></>,
    note: <><path d="M1 5l12-1 2 9-12 2z" fill="#f6e23a" stroke="#b09a14" strokeWidth=".6" /><path d="M1 5l12-1 .5 3-12 1z" fill="#fff38a" /><path d="M6 1v5h3V1" stroke="#9ba3ad" fill="none" strokeWidth="1.500" /></>,
  };
  return <Svg width="16" height="16" viewBox="0 0 16 16">{art[kind]}</Svg>;
};

/* ---------- composed parts ---------- */
const Group = ({ label, w, pad, launcher, children }) => (
  <GroupBox $w={w}>
    <GroupBody $pad={pad}>{children}</GroupBody>
    <GroupLabel><span>{label}</span>{launcher && <button aria-label={label}><Launcher /></button>}</GroupLabel>
  </GroupBox>
);
const Large = ({ w, icon, lines, arrowBelow }) => (
  <LargeButton $w={w}>
    <LargeIcon>{icon}</LargeIcon>
    {lines.map((t, i) => <LargeText key={t}>{t}{!arrowBelow && i === lines.length - 1 && <Arrow />}</LargeText>)}
    {arrowBelow && <LargeText><Arrow /></LargeText>}
  </LargeButton>
);
const Select = ({ w, value, label, joined }) => (
  <Combo $w={w} $joined={joined}>
    <select aria-label={label} defaultValue={value}><option>{value}</option></select>
    <Arrow />
  </Combo>
);

const tabs = ["Главная", "Вставка", "Разметка страницы", "Формулы", "Данные", "Рецензирование", "Вид", "Разработчик", "Надстройки"];
const columns = "ABCDEFGHIJKLMNOPQ".split("");
const widths = [26, 76, 370, 61, 61, 61, 61, 61, 61, 61, 61, 61, 64, 64, 64, 64, 64, 64];
const left = [[1, 0, 14], [3, 0, 9], [5, 0, 14], [7, 0, 9], [9, 0, 14], [11, 0, 9]];
const center = [[1, 0, 14], [3, 2, 10], [5, 0, 14], [7, 2, 10], [9, 0, 14], [11, 2, 10]];
const right = [[1, 0, 14], [3, 5, 9], [5, 0, 14], [7, 5, 9], [9, 0, 14], [11, 5, 9]];
const shift = (y) => [[y, 0, 14], [y + 2, 2, 10], [y + 4, 0, 14], [y + 6, 2, 10]];
const error = "#ДЕЛ/0!";
const tasks = [
  ["fox", "З."], ["drive", "М."], ["word", "З."], ["meter", "D."], ["folder", "М."], ["word", "М."], ["icq", "I.."], ["note", "R."],
  ["ppt", "2."], ["folder", "Э."], ["folder", "М."], ["word", "А."], ["ppt", "П."], ["word", "Д."], ["folder", "Ш"], ["folder", "2."],
  ["excel", "9."], ["folder", "2."], ["word", "И."], ["excel", "Э."], ["word", "Д."], ["excel", "М."],
];

const rowHeight = (n) => ({ 1: 25, 2: 12, 4: 20, 26: 19, 29: 17, 30: 17, 31: 17, 32: 17 }[n] || 21);
const Head = ({ n }) => <RowHead scope="row" $h={rowHeight(n)} $sel={n === 8}><div>{n}</div></RowHead>;
const Plain = ({ from = 11, row }) =>
  Array.from({ length: 18 - from }, (_, i) => (
    <Cell key={i}>{row === 8 && from + i === 14 && <Selection />}</Cell>
  ));

const SheetTable = () => (
  <Grid>
    <colgroup>{widths.map((w, i) => <col key={i} style={{ width: w }} />)}<col /></colgroup>
    <thead>
      <tr><Corner />{columns.map((c) => <ColHead key={c} scope="col" $sel={c === "O"}>{c}</ColHead>)}<ColHead /></tr>
    </thead>
    <tbody>
      <tr><Head n={1} /><Cell $title colSpan={11}>Контрольные работы</Cell><Plain /></tr>
      <tr><Head n={2} />{columns.slice(0, 11).map((c) => <Cell key={c} $under />)}<Plain /></tr>
      <tr>
        <Head n={3} />
        <Cell $box rowSpan={2}>дата среза</Cell>
        <Cell $box rowSpan={2}>тема</Cell>
        <Cell $box $wrap rowSpan={2}>Кол-во выполн</Cell>
        <Cell $box colSpan={4}>Количество оценок</Cell>
        {["% усп", "% кач", "% неус", "ср балл"].map((t) => <Cell key={t} $box rowSpan={2}>{t}</Cell>)}
        <Plain />
      </tr>
      <tr><Head n={4} />{["5", "4", "3", "2"].map((t) => <Cell key={t} $box>"{t}"</Cell>)}<Plain /></tr>
      {Array.from({ length: 22 }, (_, i) => i + 5).map((n) => (
        <tr key={n}>
          <Head n={n} />
          <Cell $box /><Cell $box /><Cell $box $grey>0</Cell>
          <Cell $box /><Cell $box /><Cell $box /><Cell $box />
          {[0, 1, 2, 3].map((k) => <Cell key={k} $box $grey>{error}</Cell>)}
          <Plain row={n} />
        </tr>
      ))}
      <tr>
        <Head n={27} />
        <Cell $box colSpan={2}>Итого</Cell>
        {[0, 1, 2, 3, 4].map((k) => <Cell key={k} $box $grey>0</Cell>)}
        {[0, 1, 2, 3].map((k) => <Cell key={k} $box $grey>{error}</Cell>)}
        <Plain />
      </tr>
      {[28, 29, 30, 31, 32].map((n) => <tr key={n}><Head n={n} /><Plain from={0} /></tr>)}
    </tbody>
  </Grid>
);

const light = "#c9ddf7";

export default function App() {
  return (
    <Screen>
      <Global />
      <TitleBar>
        <QuickRow>
          <QuickBar>
            <IconButton aria-label="Отменить"><Undo /></IconButton><Arrow />
            <IconButton aria-label="Вернуть"><Undo flip c="#a9b8d0" /></IconButton><Arrow c="#a9b8d0" />
            <IconButton aria-label="Сохранить"><Floppy /></IconButton>
            <IconButton aria-label="Просмотр"><Page lens /></IconButton>
            <IconButton aria-label="Создать"><Page /></IconButton>
            <IconButton aria-label="Сохранить как"><Floppy pen /></IconButton>
            <IconButton aria-label="Сохранить все"><SaveAll /></IconButton>
          </QuickBar>
          <IconButton $w={9} aria-label="Настройка панели"><Svg width="7" height="7" viewBox="0 0 7 7"><path d="M1 0h5v1H1zM0 3h7L3.500 6.500z" fill="#15428b" /></Svg></IconButton>
        </QuickRow>
        <Title>Мониторинг контрольных работ.xls  [Режим совместимости] <span>- Microsoft Excel</span></Title>
        <WindowButtons>
          <button aria-label="Свернуть"><Minimize /></button><button aria-label="Развернуть"><Restore /></button><button aria-label="Закрыть"><Close /></button>
        </WindowButtons>
      </TitleBar>
      <TabBar>
        {tabs.map((t, i) => <RibbonTab key={t} $active={i === 0}>{t}</RibbonTab>)}
        <TabTools>
          <IconButton aria-label="Справка"><Help /></IconButton>
          <button aria-label="Свернуть книгу"><Minimize /></button><button aria-label="Развернуть книгу"><Restore /></button><button aria-label="Закрыть книгу"><Close /></button>
        </TabTools>
      </TabBar>
      <OfficeButton aria-label="Office"><OfficeLogo /></OfficeButton>

      <Ribbon>
        <Group label="Буфер обм..." w={94} launcher>
          <Large w={62} icon={<PasteIcon />} lines={["Вставить"]} arrowBelow />
          <SmallStack $w={20}>
            <TextButton aria-label="Вырезать"><CutIcon /></TextButton>
            <TextButton aria-label="Копировать"><CopyIcon /></TextButton>
            <TextButton aria-label="Формат по образцу"><BrushIcon /></TextButton>
          </SmallStack>
        </Group>
        <Group label="Шрифт" w={197} launcher>
          <Stack>
            <Line>
              <Select w={97} value="Arial Cyr" label="Шрифт" joined />
              <Select w={43} value="10" label="Размер" />
              <ButtonGroup>
                <ToolButton $w={22} $tight aria-label="Увеличить"><Letter $s={17} $c="#333">A</Letter><SizeTip up /></ToolButton>
                <ToolButton $w={22} $tight aria-label="Уменьшить"><Letter $s={13} $c="#333">A</Letter><SizeTip /></ToolButton>
              </ButtonGroup>
            </Line>
            <Line>
              <ButtonGroup>
                <ToolButton $w={22}><Letter>Ж</Letter></ToolButton>
                <ToolButton $w={23}><Letter $i>К</Letter></ToolButton>
                <ToolButton $w={34}><Letter $u>Ч</Letter><Arrow /></ToolButton>
              </ButtonGroup>
              <ButtonGroup><ToolButton $w={33} aria-label="Границы"><Eraser /><Arrow /></ToolButton></ButtonGroup>
              <ButtonGroup>
                <ToolButton $w={33} aria-label="Заливка"><Bucket /><Arrow /></ToolButton>
                <ToolButton $w={33} aria-label="Цвет"><FontColor /><Arrow /></ToolButton>
              </ButtonGroup>
            </Line>
          </Stack>
        </Group>
        <Group label="Выравнивание" w={354} launcher>
          <Stack>
            <Line>
              <ButtonGroup>
                <ToolButton $w={22} aria-label="По верху"><Lines rows={shift(2)} /></ToolButton>
                <ToolButton $w={23} aria-label="По середине"><Lines rows={shift(5)} /></ToolButton>
                <ToolButton $w={22} $on aria-label="По низу"><Lines rows={shift(8)} /></ToolButton>
              </ButtonGroup>
              <ButtonGroup><ToolButton $w={30} aria-label="Ориентация"><Orient /><Arrow /></ToolButton></ButtonGroup>
            </Line>
            <Line>
              <ButtonGroup>
                <ToolButton $w={22} aria-label="Влево"><Lines rows={left} /></ToolButton>
                <ToolButton $w={23} aria-label="По центру"><Lines rows={center} /></ToolButton>
                <ToolButton $w={22} aria-label="Вправо"><Lines rows={right} /></ToolButton>
              </ButtonGroup>
              <ButtonGroup>
                <ToolButton $w={22} aria-label="Уменьшить отступ"><Indent /></ToolButton>
                <ToolButton $w={22} aria-label="Увеличить отступ"><Indent right /></ToolButton>
              </ButtonGroup>
            </Line>
          </Stack>
          <Divider />
          <Stack>
            <TextButton><WrapIcon />Перенос текста</TextButton>
            <TextButton><MergeIcon />Объединить и поместить в центре<Arrow /></TextButton>
          </Stack>
        </Group>
        <Group label="Число" w={136} launcher>
          <Stack>
            <Select w={128} value="Общий" label="Числовой формат" />
            <Line>
              <ButtonGroup>
                <ToolButton $w={33} aria-label="Денежный"><Money /><Arrow /></ToolButton>
                <ToolButton $w={23} $digits>%</ToolButton>
                <ToolButton $w={22} $digits>000</ToolButton>
              </ButtonGroup>
              <ButtonGroup>
                <ToolButton $w={22} aria-label="Больше знаков"><Decimals more /></ToolButton>
                <ToolButton $w={21} aria-label="Меньше знаков"><Decimals /></ToolButton>
              </ButtonGroup>
            </Line>
          </Stack>
        </Group>
        <Group label="Стили" w={249} pad={5}>
          <Large w={104} icon={<CondIcon />} lines={["Условное", "форматирование"]} />
          <Large w={92} icon={<TableFmtIcon />} lines={["Форматировать", "как таблицу"]} />
          <Large w={42} icon={<CellStyleIcon />} lines={["Стили", "ячеек"]} />
        </Group>
        <Group label="Ячейки" w={152}>
          <Large w={50} icon={<InsertIcon />} lines={["Вставить"]} arrowBelow />
          <Large w={48} icon={<DeleteIcon />} lines={["Удалить"]} arrowBelow />
          <Large w={46} icon={<FormatIcon />} lines={["Формат"]} arrowBelow />
        </Group>
        <Group label="Редактирование" pad={8}>
          <SmallStack $w={90}>
            <TextButton><Letter $c="#222">Σ</Letter>Автосумма<Arrow /></TextButton>
            <TextButton><FillIcon />Заполнить<Arrow /></TextButton>
            <TextButton><Eraser />Очистить<Arrow /></TextButton>
          </SmallStack>
          <Large w={70} icon={<SortIcon />} lines={["Сортировка", "и фильтр"]} />
          <Large w={62} icon={<FindIcon />} lines={["Найти и", "выделить"]} />
        </Group>
      </Ribbon>

      <FormulaBar>
        <NameBox><input aria-label="Имя ячейки" defaultValue="O8" /><button aria-label="Список имён"><Svg width="8" height="4" viewBox="0 0 8 4"><path d="M0 0h8L4 4z" fill="#000" /></Svg></button></NameBox>
        <FxStrip><Knob /><FxButton>f<small>x</small></FxButton></FxStrip>
        <FormulaInput aria-label="Строка формул" />
        <ExpandButton aria-label="Развернуть строку формул"><Svg width="9" height="9" viewBox="0 0 9 9" fill="none" stroke="#000" strokeWidth="1.300"><path d="M1 1l3.500 3L8 1M1 5l3.500 3L8 5" /></Svg></ExpandButton>
      </FormulaBar>

      <SheetArea>
        <GridPane><SheetTable /></GridPane>
        <VScroll>
          <SplitBox />
          <ScrollArrow aria-label="Вверх"><ScrollTri d="M0 6.500h9L4.500 2z" /></ScrollArrow>
          <VThumb><Svg width="8" height="8" viewBox="0 0 8 8"><path d="M0 .5h8M0 2.500h8M0 4.500h8M0 6.500h8" stroke="#7f8ca3" /></Svg></VThumb>
          <VRest />
          <ScrollArrow aria-label="Вниз"><ScrollTri d="M0 2.500h9L4.500 7z" /></ScrollArrow>
        </VScroll>
      </SheetArea>

      <SheetBar>
        <SheetNav>
          <button aria-label="Первый лист"><Tri d="M1 1h1.500v7H1zM8 1v7L3.500 4.500z" /></button>
          <button aria-label="Предыдущий лист"><Tri d="M6.500 1v7L2 4.500z" /></button>
          <button aria-label="Следующий лист"><Tri d="M2 1v7l4.500-3.500z" /></button>
          <button aria-label="Последний лист"><Tri d="M6.500 1H8v7H6.500zM1 1v7l4.500-3.500z" /></button>
        </SheetNav>
        <SheetTab $w={86}>математика</SheetTab><Slant $l={light} $r={light} />
        <SheetTab $w={53}>русский</SheetTab><Slant $l={light} $r={light} />
        <SheetTab $w={50} $edge>чтение</SheetTab>
        <SheetTab $w={63} $active>окр мир</SheetTab><Slant $l="#fff" $r={light} />
        <SheetTab $w={52}>шаблон</SheetTab><Slant $l={light} $r={light} />
        <SheetTab $w={20} aria-label="Новый лист"><NewSheet /></SheetTab><Slant $l={light} $r="#9fb8dc" />
        <HScroll>
          <HSplit />
          <HTrack>
            <ScrollArrow $h={15} aria-label="Влево"><ScrollTri d="M6.500 0v9L2 4.500z" /></ScrollArrow>
            <HThumb><Svg width="8" height="8" viewBox="0 0 8 8"><path d="M.5 0v8M2.500 0v8M4.500 0v8M6.500 0v8" stroke="#6f7784" /></Svg></HThumb>
            <HRest />
            <ScrollArrow $h={15} aria-label="Вправо"><ScrollTri d="M2 0v9l4.500-4.500z" /></ScrollArrow>
          </HTrack>
          <HSplit />
        </HScroll>
      </SheetBar>

      <StatusBar>
        <StatusPart>Готово</StatusPart>
        <StatusPart><button aria-label="Запись макроса"><Macro /></button></StatusPart>
        <StatusPart $grow />
        <ViewPart>
          <ViewGroup>
            <ToolButton $w={18} $on aria-label="Обычный"><ViewIcon kind={0} /></ToolButton>
            <ToolButton $w={18} aria-label="Разметка"><ViewIcon kind={1} /></ToolButton>
            <ToolButton $w={18} aria-label="Страничный"><ViewIcon kind={2} /></ToolButton>
          </ViewGroup>
          <Percent>100%</Percent>
          <button aria-label="Уменьшить масштаб"><RoundSign /></button>
          <ZoomRange aria-label="Масштаб" defaultValue={50} />
          <button aria-label="Увеличить масштаб"><RoundSign plus /></button>
        </ViewPart>
      </StatusBar>

      <TaskBar>
        <StartButton><Flag />пуск</StartButton>
        <TaskList>
          {tasks.map(([k, t], i) => <TaskButton key={i} $on={i === tasks.length - 1}><TaskIcon kind={k} />{t}</TaskButton>)}
        </TaskList>
        <Language>RU</Language>
        <Tray>
          <TrayToggle aria-label="Показать значки"><Svg width="18" height="18" viewBox="0 0 18 18"><circle cx="9" cy="9" r="8" fill="#2a86ea" stroke="#a9d4fb" /><path d="M10.500 5L7 9l3.500 4" stroke="#fff" strokeWidth="2" fill="none" /></Svg></TrayToggle>
          <Svg width="16" height="16" viewBox="0 0 16 16"><path d="M8 1v14M1 8h14M3 3l10 10M13 3L3 13" stroke="#63c82d" strokeWidth="3" /><circle cx="8" cy="8" r="2" fill="#f5e04a" /></Svg>
          <Svg width="17" height="17" viewBox="0 0 17 17"><circle cx="8.500" cy="8.500" r="8" fill="#e8611b" /><path d="M8.500 13a4.500 4.500 0 110-9c3 0 4.500 2 4.500 4.500V13" fill="none" stroke="#fff" strokeWidth="2" /><circle cx="8.500" cy="8.500" r="1.500" fill="#fff" /></Svg>
          <time>23:36</time>
        </Tray>
      </TaskBar>

      <Meter>
        <MeterMain>
          <span>5 KB/s</span>
          <Svg width="17" height="16" viewBox="0 0 17 16" opacity=".7"><path d="M1 4h6v7H1z" fill="#d3dde6" stroke="#7b8fa3" /><circle cx="10" cy="5" r="4" fill="#cfd3d6" stroke="#8595a5" /><path d="M6 5h9v6H6z" fill="#cfd3d6" stroke="#8595a5" /><path d="M6 11h9l-4.500 5z" fill="#5db1ea" /></Svg>
        </MeterMain>
        <MeterSide>
          <Svg width="12" height="12" viewBox="0 0 12 12"><path d="M3 1h6M3 3h6v3h3L6 11.500 0 6h3z" fill="#8fcaf5" stroke="#3d87c0" /></Svg>
          <Svg width="10" height="6" viewBox="0 0 10 6"><path d="M0 0h10L5 6z" fill="#5a7c98" /></Svg>
        </MeterSide>
      </Meter>
    </Screen>
  );
}
